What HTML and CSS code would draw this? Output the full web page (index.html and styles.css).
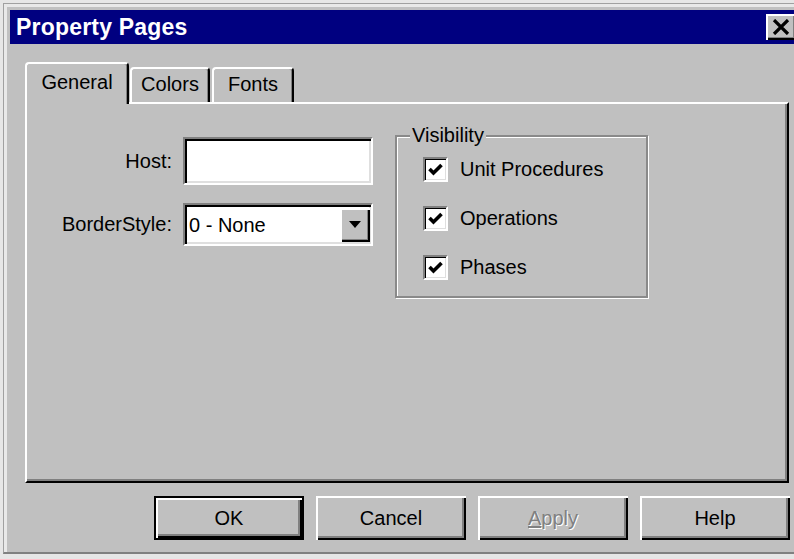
FILE: index.html
```html
<!DOCTYPE html>
<html lang="en">
<head>
<meta charset="utf-8">
<title>Property Pages</title>
<link rel="stylesheet" href="styles.css">
</head>
<body>
<div class="window">
  <div class="titlebar">
    <span class="title">Property Pages</span>
    <button class="close" type="button" aria-label="Close">
      <svg width="18" height="16" viewBox="0 0 18 16"><path d="M2 1 L16 15 M16 1 L2 15" stroke="#000" stroke-width="3.2" fill="none"/></svg>
    </button>
  </div>
  <div class="client">
    <div class="tabs">
      <div class="tab tab-active tab-general">General</div>
      <div class="tab tab-colors">Colors</div>
      <div class="tab tab-fonts">Fonts</div>
    </div>
    <div class="panel">
      <div class="form">
        <label class="field-label">Host:</label>
        <div class="textbox"></div>
        <label class="field-label">BorderStyle:</label>
        <div class="combo">
          <span class="combo-value">0 - None</span>
          <span class="combo-btn">
            <svg width="12" height="7" viewBox="0 0 12 7"><path d="M0 0 H12 L6 7 Z" fill="#000"/></svg>
          </span>
        </div>
      </div>
      <div class="group">
        <span class="group-title">Visibility</span>
        <div class="check-row">
          <span class="checkbox"><svg width="19" height="19" viewBox="0 0 19 19"><path d="M3.5 9 L7.5 13 L15.5 5" stroke="#000" stroke-width="3.6" fill="none"/></svg></span>
          <span class="check-label">Unit Procedures</span>
        </div>
        <div class="check-row">
          <span class="checkbox"><svg width="19" height="19" viewBox="0 0 19 19"><path d="M3.5 9 L7.5 13 L15.5 5" stroke="#000" stroke-width="3.6" fill="none"/></svg></span>
          <span class="check-label">Operations</span>
        </div>
        <div class="check-row">
          <span class="checkbox"><svg width="19" height="19" viewBox="0 0 19 19"><path d="M3.5 9 L7.5 13 L15.5 5" stroke="#000" stroke-width="3.6" fill="none"/></svg></span>
          <span class="check-label">Phases</span>
        </div>
      </div>
    </div>
    <div class="buttons">
      <button class="btn btn-default" type="button">OK</button>
      <button class="btn" type="button">Cancel</button>
      <button class="btn btn-disabled" type="button"><u>A</u>pply</button>
      <button class="btn" type="button">Help</button>
    </div>
  </div>
</div>
</body>
</html>
```
FILE: styles.css
```css
html, body {
  margin: 0;
  padding: 0;
  overflow: hidden;
}

body {
  width: 794px;
  height: 559px;
  background: #e6e6e6;
  font-family: "Liberation Sans", Arial, sans-serif;
  font-size: 20px;
  color: #000;
}

/* Outer dialog frame */
.window {
  box-sizing: border-box;
  width: 800px;
  height: 551px;
  margin: 3px 0 0 3px;
  padding: 6px 0 0 6px;
  background: #c0c0c0;
  border-top: 1px solid #a0a0a0;
  border-left: 1px solid #a0a0a0;
  border-bottom: 2px solid #808080;
  box-shadow: inset 3px 3px #e8e8e8;
}

.titlebar {
  height: 34px;
  background: #000080;
  display: flex;
  align-items: center;
  justify-content: space-between;
  padding-left: 6px;
}

.title {
  color: #fff;
  font-weight: bold;
  font-size: 23px;
  letter-spacing: 0.2px;
}

.close {
  box-sizing: border-box;
  width: 30px;
  height: 26px;
  margin-right: 7px;
  padding: 0;
  background: #c0c0c0;
  border: 0;
  box-shadow: inset 2px 2px #fff, inset -2px -2px #000, inset -3px -3px #808080;
  display: flex;
  align-items: center;
  justify-content: center;
}

.client {
  box-sizing: border-box;
  width: 780px;
  padding: 18px 0 0 15px;
}

/* Tab strip */
.tabs {
  display: flex;
  align-items: flex-end;
  height: 42px;
  margin-bottom: -2px;
  position: relative;
  z-index: 1;
}

.tab {
  box-sizing: border-box;
  height: 35px;
  margin-bottom: 2px;
  background: #c0c0c0;
  border-top: 2px solid #fff;
  border-left: 2px solid #fff;
  border-right: 2px solid #000;
  border-radius: 4px 4px 0 0;
  box-shadow: inset -1px 0 #808080;
  display: flex;
  align-items: center;
  justify-content: center;
  padding-bottom: 2px;
}

.tab-active {
  height: 42px;
  margin-bottom: 0;
  padding-bottom: 4px;
}

.tab-general { width: 104px; }
.tab-colors { width: 80px; margin-left: 1px; }
.tab-fonts { width: 82px; margin-left: 2px; }

/* Tab page */
.panel {
  box-sizing: border-box;
  width: 764px;
  height: 381px;
  border: 2px solid;
  border-color: #fff #000 #000 #fff;
  box-shadow: inset -2px -2px #808080;
  display: flex;
  align-items: flex-start;
}

.form {
  margin-top: 33px;
  display: grid;
  grid-template-columns: 145px 190px;
  column-gap: 11px;
  row-gap: 18px;
}

.field-label {
  align-self: center;
  text-align: right;
  white-space: nowrap;
}

.textbox,
.combo {
  box-sizing: border-box;
  width: 190px;
  background: #fff;
  border: 2px solid;
  border-color: #808080 #fff #fff #808080;
  box-shadow: inset 2px 2px #000, inset -2px -2px #dfdfdf;
}

.textbox {
  height: 48px;
}

.combo {
  height: 43px;
  display: flex;
  align-items: center;
  justify-content: space-between;
  padding: 0 1px 0 4px;
}

.combo-value {
  padding-top: 2px;
}

.combo-btn {
  box-sizing: border-box;
  width: 30px;
  height: 34px;
  background: #c0c0c0;
  box-shadow: inset 2px 2px #fff, inset -2px -2px #000, inset -3px -3px #808080;
  display: flex;
  align-items: center;
  justify-content: center;
}

/* Group box */
.group {
  box-sizing: border-box;
  width: 253px;
  height: 163px;
  margin: 31px 0 0 22px;
  border: 2px solid #8a8a8a;
  box-shadow: inset 1px 1px #fff, 1px 1px #fff;
}

.group-title {
  display: block;
  width: fit-content;
  line-height: 22px;
  margin: -13px 0 0 13px;
  padding: 0 2px;
  background: #c0c0c0;
}

.check-row {
  display: flex;
  align-items: center;
  gap: 12px;
  height: 25px;
  padding-left: 26px;
  margin-top: 11px;
}

.check-row + .check-row {
  margin-top: 24px;
}

.checkbox {
  box-sizing: border-box;
  width: 25px;
  height: 25px;
  background: #fff;
  border: 2px solid;
  border-color: #808080 #fff #fff #808080;
  box-shadow: inset 1px 1px #000, inset -1px -1px #dfdfdf;
  display: flex;
  align-items: center;
  justify-content: center;
}

/* Dialog buttons */
.buttons {
  display: flex;
  justify-content: flex-end;
  gap: 12px;
  margin-top: 13px;
}

.btn {
  box-sizing: border-box;
  width: 150px;
  height: 44px;
  padding: 0;
  font-family: inherit;
  font-size: 20px;
  color: #000;
  background: #c0c0c0;
  border: 0;
  box-shadow: inset 2px 2px #fff, inset -2px -2px #000, inset -4px -4px #808080;
}

.btn-default {
  border: 2px solid #000;
}

.btn-disabled {
  color: #808080;
  text-shadow: 1px 1px #fff;
}

.btn-disabled u {
  text-decoration-color: #808080;
}
```
